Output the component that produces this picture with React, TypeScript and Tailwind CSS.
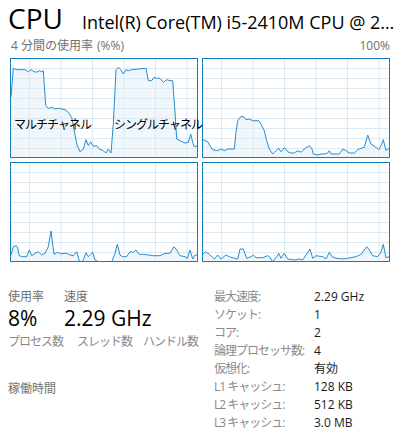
import React from 'react'

type Pt = [number, number]

// graph data, local coords inside a 186x98 plot
const cpu0: Pt[] = [[0,38],[2.3,9.3],[5.7,10.7],[14,10.7],[17.3,12.7],[19.7,10.7],[22.3,12.3],[25.7,13.3],[28.3,11.7],[30.7,12.7],[32.3,11.7],[34.7,46.7],[37.3,49.3],[40.7,48.3],[44,50],[47.3,49.3],[54,50.7],[57.3,53.3],[60.7,58.3],[62.3,66.7],[64,76],[66.3,86.7],[69,92.7],[72.3,90],[75,80.7],[77.3,86.7],[79.7,82.7],[82.3,87.3],[85.7,86.7],[88.3,90],[92.3,91.7],[95,94],[97.3,90],[100,94],[102.3,65],[105,10.7],[107.3,8.3],[109.7,10.7],[112.3,15],[115,10.7],[117.3,11.7],[120.7,10.7],[127.3,10],[135,9.3],[137.3,21.7],[140.7,21.7],[143,18.3],[145.7,19.3],[149,19.3],[152.3,23.3],[155.7,20.7],[159,21.7],[161.7,21.7],[164,53.3],[165.7,80],[169,81.7],[174,84],[177.3,83.3],[179.7,75],[181.7,83.3],[183,87.3],[186,87.3]]

const cpu1: Pt[] = [[0,80.7],[4.7,82.7],[7,86.7],[9.7,90.7],[14.7,91.7],[18,90],[21.3,91.7],[24.7,90],[31.3,90],[33,73.3],[34.7,61.7],[38,57.3],[41.3,58.3],[43,60.7],[46.3,60],[49.7,61.7],[55.7,61.7],[58,65],[61.3,71.7],[63.7,81.7],[66.3,90],[69.7,95],[73,91.7],[75.7,89.3],[78,92.7],[81.3,88.7],[84.7,92.7],[88,94],[91.3,94],[94.7,91.7],[98,93.3],[101.3,90],[106.3,86.7],[109,90],[110.3,95],[114.7,96],[118,95],[121.3,95],[124.7,94],[126.3,91.7],[128,95],[133,95],[136.3,95],[139.7,90],[143,91.7],[146.3,94],[151.3,94],[154.7,90.7],[158,89.3],[161.3,88.3],[164.7,76],[168,85],[173,88.3],[175.7,90.7],[178,86.7],[180.3,80.7],[183,91.7],[186,89.3]]

const cpu2: Pt[] = [[0,92],[2.3,83.7],[5,82.7],[6.3,83.7],[8.3,92.7],[11.7,93.7],[15.7,93.7],[18.3,87],[20.7,92.7],[24,90.3],[27.3,88.7],[30.7,92],[34,90.3],[37.3,83.7],[40,68],[43,91.3],[46.3,89.3],[49.7,90.7],[55.7,90.3],[59,92],[62.3,92.7],[65.7,88.7],[68.3,98],[70.7,98.7],[72.3,97],[75,89.7],[77.3,93.7],[79.7,91.3],[81.7,89.3],[84,97],[87.3,98.7],[100.7,99],[104,90.3],[106.3,81.3],[109,92],[111.7,93.7],[115.7,93.7],[119,88.7],[122.3,89.3],[125,87],[128.3,91.3],[132.3,91.3],[137.3,92],[142.3,92.7],[149,92.7],[154,90.3],[159,90.3],[163,83.7],[165.7,87],[169,92.7],[174,93.7],[176.3,95.3],[179,87],[181.7,96],[184,92],[186,92]]

const cpu3: Pt[] = [[0,91.3],[2.3,88.7],[6.3,91.3],[11.3,96],[14.7,92],[18,96],[23,92],[26.3,93.7],[31.3,95.3],[34.7,96],[37,86],[40.3,86],[43.7,95.3],[48,93.7],[50.3,92],[53,94.7],[59.7,94.7],[64.7,92.7],[66.3,93.7],[69.7,98.7],[73,94.7],[75.7,90.3],[78,95.3],[81.3,90.3],[84.7,96],[91.3,97],[96.3,96],[99.7,97],[103,92],[107,86],[109.7,95.3],[113,92.7],[119.7,93.7],[123,96],[126.3,89.3],[129,93.7],[133,95.3],[139.7,96],[144.7,95.3],[148,94.7],[153,93.7],[158,91.3],[161.3,87],[163.7,83.7],[166.3,87],[169.7,92.7],[174.7,93.7],[178,89.3],[180.3,81.3],[183,94.7],[186,93.7]]

const vLines = [18.5, 50, 81.5, 113, 144.5, 176]
const hLines = [9, 19, 29, 39, 49, 59, 69, 79, 89]

function Graph({ pts, children }: { pts: Pt[]; children?: React.ReactNode }) {
  const line = pts.map((p) => p.join(',')).join(' ')
  const area = `0,98 ${line} 186,98`
  return (
    <div className="relative h-[100px] border border-[#117dbb] bg-white">
      <svg viewBox="0 0 186 98" preserveAspectRatio="none" className="block h-full w-full">
        <polygon points={area} fill="#f1f6fa" />
        {vLines.map((x) => (
          <line key={'v' + x} x1={x} x2={x} y1={0} y2={98} stroke="#d9eaf4" strokeWidth="1" />
        ))}
        {hLines.map((y) => (
          <line key={'h' + y} x1={0} x2={186} y1={y + 0.5} y2={y + 0.5} stroke="#d9eaf4" strokeWidth="1" />
        ))}
        <polyline points={line} fill="none" stroke="#2a8ccb" strokeWidth="1" strokeLinejoin="round" />
      </svg>
      {children}
    </div>
  )
}

const specs: [string, string][] = [
  ['最大速度:', '2.29 GHz'],
  ['ソケット:', '1'],
  ['コア:', '2'],
  ['論理プロセッサ数:', '4'],
  ['仮想化:', '有効'],
  ['L1 キャッシュ:', '128 KB'],
  ['L2 キャッシュ:', '512 KB'],
  ['L3 キャッシュ:', '3.0 MB'],
]

export default function App() {
  return (
    <div
      className="relative h-[440px] w-[400px] overflow-hidden bg-white text-black"
      style={{ fontFamily: "'Open Sans', 'Noto Sans CJK JP', sans-serif" }}
    >
      {/* header */}
      <div className="flex h-[38px] items-baseline pl-[8px] pt-[4px]">
        <div className="w-[74px] text-[28px] leading-none">CPU</div>
        <div className="whitespace-nowrap text-[18px] leading-none">Intel(R) Core(TM) i5-2410M CPU @ 2…</div>
      </div>

      <div className="flex h-[16px] items-center justify-between pl-[11px] pr-[10px] text-[12px] text-[#707070]">
        <div className="flex items-center whitespace-nowrap">
          <span className="w-[10px]">4</span>
          <span className="w-[76px]">分間の使用率</span>
          <span>(%%)</span>
        </div>
        <span>100%</span>
      </div>

      {/* graphs */}
      <div className="mt-[4px] grid grid-cols-2 gap-[4px] px-[10px]">
        <Graph pts={cpu0}>
          <span className="absolute left-[3px] top-[59px] z-10 whitespace-nowrap text-[12px] leading-[14px] tracking-[-1px]">
            マルチチャネル
          </span>
          <span className="absolute left-[103px] top-[59px] z-10 whitespace-nowrap text-[12px] leading-[14px] tracking-[-1px]">
            シングルチャネル
          </span>
        </Graph>
        <Graph pts={cpu1} />
        <Graph pts={cpu2} />
        <Graph pts={cpu3} />
      </div>

      {/* stats */}
      <div className="mt-[26px] flex">
        <div className="w-[214px] pl-[8px]">
          <div className="flex h-[18px] items-center text-[12px] text-[#707070]">
            <span className="w-[56px]">使用率</span>
            <span>速度</span>
          </div>
          <div className="flex h-[24px] items-center text-[21px] leading-none">
            <span className="w-[56px]">8%</span>
            <span>2.29 GHz</span>
          </div>
          <div className="mt-[3px] flex h-[18px] items-center text-[12px] tracking-[-1px] text-[#8a8a8a]">
            <span className="w-[69px]">プロセス数</span>
            <span className="w-[66px]">スレッド数</span>
            <span>ハンドル数</span>
          </div>
          <div className="mt-[29px] flex h-[18px] items-center text-[12px] text-[#707070]">稼働時間</div>
        </div>

        <div className="flex flex-col">
          {specs.map(([k, v]) => (
            <div key={k} className="flex h-[18px] items-center text-[12px]">
              <span className="w-[100px] tracking-[-1px] text-[#8a8a8a]">{k}</span>
              <span className="text-[#1a1a1a]">{v}</span>
            </div>
          ))}
        </div>
      </div>
    </div>
  )
}
